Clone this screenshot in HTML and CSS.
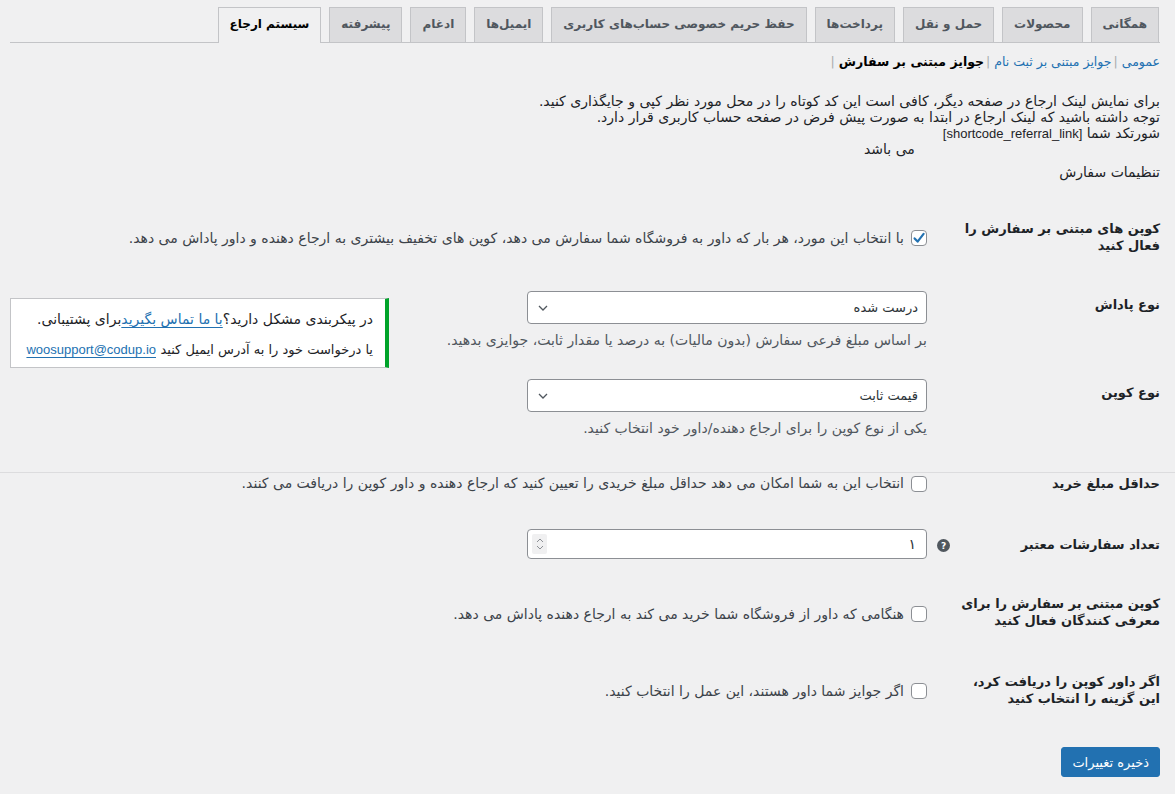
FILE: index.html
```html
<!DOCTYPE html>
<html lang="fa" dir="rtl">
  <head>
    <meta charset="UTF-8" />
    <meta name="viewport" content="width=device-width, initial-scale=1.0" />
    <title>سیستم ارجاع</title>
    <link rel="stylesheet" href="styles.css">
  </head>
  <body>
    <div class="wrap">
      <nav class="nav-tabs">
        <a class="nav-tab">همگانی</a>
        <a class="nav-tab">محصولات</a>
        <a class="nav-tab">حمل و نقل</a>
        <a class="nav-tab">پرداخت‌ها</a>
        <a class="nav-tab">حفظ حریم خصوصی حساب‌های کاربری</a>
        <a class="nav-tab">ایمیل‌ها</a>
        <a class="nav-tab">ادغام</a>
        <a class="nav-tab">پیشرفته</a>
        <a class="nav-tab nav-tab-active">سیستم ارجاع</a>
      </nav>

      <ul class="subsubsub">
        <li><a class="link">عمومی</a> <span class="sep">|</span></li>
        <li><a class="link">جوایز مبتنی بر ثبت نام</a> <span class="sep">|</span></li>
        <li><b class="current">جوایز مبتنی بر سفارش</b> <span class="sep">|</span></li>
      </ul>

      <div class="intro">
        <p>برای نمایش لینک ارجاع در صفحه دیگر، کافی است این کد کوتاه را در محل مورد نظر کپی و جایگذاری کنید.</p>
        <p>توجه داشته باشید که لینک ارجاع در ابتدا به صورت پیش فرض در صفحه حساب کاربری قرار دارد.</p>
        <p class="shortcode-line"><span>شورتکد شما <span class="latin shortcode" dir="ltr">[shortcode_referral_link]</span></span><span class="shortcode-tail">می باشد</span></p>
      </div>

      <h2 class="section-title">تنظیمات سفارش</h2>

      <div class="form-table first-table">
        <div class="row">
          <div class="row-label">کوپن های مبتنی بر سفارش را فعال کنید</div>
          <div class="row-tip"></div>
          <div class="row-field">
            <label class="check-line">
              <span class="check is-checked">
                <svg width="14" height="14" viewBox="0 0 14 14"><path d="M2.6 7.4 L5.6 10.6 L11.6 2.8" fill="none" stroke="#2271b1" stroke-width="2.2" stroke-linecap="round" stroke-linejoin="round"/></svg>
              </span>
              با انتخاب این مورد، هر بار که داور به فروشگاه شما سفارش می دهد، کوپن های تخفیف بیشتری به ارجاع دهنده و داور پاداش می دهد.
            </label>
          </div>
        </div>

        <div class="row row-with-aside">
          <div class="row-label">نوع پاداش</div>
          <div class="row-tip"></div>
          <div class="row-field row-field-top">
            <div class="select">
              <span>درست شده</span>
              <svg width="10" height="6" viewBox="0 0 10 6"><path d="M1 1 L5 5 L9 1" fill="none" stroke="#50575e" stroke-width="1.3"/></svg>
            </div>
            <p class="description">بر اساس مبلغ فرعی سفارش (بدون مالیات) به درصد یا مقدار ثابت، جوایزی بدهید.</p>
          </div>
          <div class="support-box">
            <p>در پیکربندی مشکل دارید؟<a class="link underline">با ما تماس بگیرید</a>برای پشتیبانی.</p>
            <p><span class="support-ask">یا درخواست خود را به آدرس ایمیل کنید</span> <a class="link underline latin email">woosupport@codup.io</a></p>
          </div>
        </div>

        <div class="row">
          <div class="row-label">نوع کوپن</div>
          <div class="row-tip"></div>
          <div class="row-field row-field-top">
            <div class="select">
              <span>قیمت ثابت</span>
              <svg width="10" height="6" viewBox="0 0 10 6"><path d="M1 1 L5 5 L9 1" fill="none" stroke="#50575e" stroke-width="1.3"/></svg>
            </div>
            <p class="description">یکی از نوع کوپن را برای ارجاع دهنده/داور خود انتخاب کنید.</p>
          </div>
        </div>
      </div>
    </div>

    <hr class="divider">

    <div class="wrap">
      <div class="form-table">
        <div class="row row-compact">
          <div class="row-label">حداقل مبلغ خرید</div>
          <div class="row-tip"></div>
          <div class="row-field">
            <label class="check-line">
              <span class="check"></span>
              انتخاب این به شما امکان می دهد حداقل مبلغ خریدی را تعیین کنید که ارجاع دهنده و داور کوپن را دریافت می کنند.
            </label>
          </div>
        </div>

        <div class="row row-input">
          <div class="row-label">تعداد سفارشات معتبر</div>
          <div class="row-tip"><span class="help-tip">?</span></div>
          <div class="row-field">
            <div class="number-input">
              <span>۱</span>
              <span class="spinner">
                <svg width="8" height="14" viewBox="0 0 8 14"><path d="M1 5 L4 2 L7 5 M1 9 L4 12 L7 9" fill="none" stroke="#8c8f94" stroke-width="1"/></svg>
              </span>
            </div>
          </div>
        </div>

        <div class="row row-tall">
          <div class="row-label">کوپن مبتنی بر سفارش را برای معرفی کنندگان فعال کنید</div>
          <div class="row-tip"></div>
          <div class="row-field">
            <label class="check-line">
              <span class="check"></span>
              هنگامی که داور از فروشگاه شما خرید می کند به ارجاع دهنده پاداش می دهد.
            </label>
          </div>
        </div>

        <div class="row">
          <div class="row-label">اگر داور کوپن را دریافت کرد، این گزینه را انتخاب کنید</div>
          <div class="row-tip"></div>
          <div class="row-field">
            <label class="check-line">
              <span class="check"></span>
              اگر جوایز شما داور هستند، این عمل را انتخاب کنید.
            </label>
          </div>
        </div>
      </div>

      <p class="submit">
        <button class="button-primary">ذخیره تغییرات</button>
      </p>
    </div>
  </body>
</html>
```

FILE: styles.css
```css
* {
  box-sizing: border-box;
}
body {
  margin: 0;
  background-color: #f0f0f1;
  color: #3c434a;
  font-family: "DejaVu Sans", sans-serif;
  font-size: 14px;
}
p {
  margin: 0;
}
.wrap {
  margin: 0 15px 0 10px;
}
.latin {
  font-family: "Liberation Sans", Arial, sans-serif;
}
.link {
  color: #2271b1;
  text-decoration: none;
}
.underline {
  text-decoration: underline;
  text-underline-offset: 3px;
}

/* tabs */
.nav-tabs {
  display: flex;
  gap: 8px;
  padding-top: 7px;
  padding-right: 1px;
  border-bottom: 1px solid #c3c4c7;
}
.nav-tab {
  height: 35px;
  line-height: 33px;
  padding: 0 11px;
  background-color: #dcdcde;
  border: 1px solid #c3c4c7;
  border-bottom: none;
  color: #50575e;
  font-size: 12px;
  font-weight: 600;
  white-space: nowrap;
}
.nav-tab-active {
  background-color: #f0f0f1;
  color: #000;
  margin-bottom: -1px;
  height: 36px;
}

/* sub links */
.subsubsub {
  list-style: none;
  display: flex;
  margin: 10px 0 0 0;
  padding: 0;
  font-size: 12.5px;
  line-height: 18px;
}
.subsubsub li {
  white-space: nowrap;
}
.sep {
  color: #a7aaad;
  margin-left: 2px;
}
.current {
  color: #000;
}

/* intro */
.intro {
  margin-top: 22px;
  color: #1d2327;
  font-size: 14px;
  line-height: 16px;
}
.shortcode-line {
  display: flex;
  align-items: flex-start;
  height: 32px;
}
.shortcode {
  font-size: 13px;
}
.shortcode-tail {
  margin-top: 16px;
  margin-right: 28px;
}
.section-title {
  margin: 5px 0 0 0;
  font-size: 14px;
  font-weight: 500;
  color: #1d2327;
  line-height: 20px;
}

/* form rows */
.first-table {
  margin-top: 18px;
}
.row {
  display: grid;
  grid-template-columns: 210px 23px 1fr;
}
.row-with-aside {
  grid-template-columns: 210px 23px 1fr 379px;
}
.row-label {
  padding: 20px 0 22px 10px;
  color: #1d2327;
  font-size: 13px;
  font-weight: 600;
  line-height: 17px;
}
.row-tip {
  align-self: center;
}
.row-field {
  align-self: center;
  padding: 15px 0;
  line-height: 17px;
}
.row-field-top {
  align-self: start;
}
.row-compact .row-label {
  padding: 2px 0 21px 10px;
}
.row-compact .row-field {
  align-self: start;
  padding: 2px 0 0 0;
}
.row-input .row-label {
  padding-top: 23px;
}
.row-tall .row-label {
  padding-bottom: 24px;
}

.check-line {
  display: flex;
  align-items: center;
  gap: 7px;
  font-size: 14px;
  white-space: nowrap;
}
.check {
  width: 16px;
  height: 16px;
  flex-shrink: 0;
  display: flex;
  align-items: center;
  justify-content: center;
  background-color: #fff;
  border: 1px solid #8c8f94;
  border-radius: 4px;
}

.select {
  display: flex;
  justify-content: space-between;
  align-items: center;
  width: 400px;
  height: 33px;
  padding: 0 8px 0 10px;
  background-color: #fff;
  border: 1px solid #8c8f94;
  border-radius: 4px;
  color: #2c3338;
  font-size: 13px;
}
.description {
  margin-top: 8px;
  color: #50575e;
  font-size: 14px;
  white-space: nowrap;
}

.support-box {
  align-self: start;
  margin-top: 22px;
  margin-bottom: -20px;
  height: 70px;
  padding: 10px 12px 0 10px;
  background-color: #fff;
  border: 1px solid #c3c4c7;
  border-right: 4px solid #00a32a;
  color: #1d2327;
  font-size: 14px;
  line-height: 20px;
  white-space: nowrap;
}
.support-box p + p {
  margin-top: 10px;
}
.support-ask {
  font-size: 13px;
}
.email {
  font-size: 13px;
}

.divider {
  margin: 20px 0 0 0;
  border: none;
  border-top: 1px solid #dcdcde;
  height: 0;
}

.help-tip {
  display: inline-flex;
  align-items: center;
  justify-content: center;
  width: 13px;
  height: 13px;
  border-radius: 50%;
  background-color: #50575e;
  color: #fff;
  font-size: 9px;
  font-weight: bold;
}
.number-input {
  display: flex;
  justify-content: space-between;
  align-items: center;
  width: 400px;
  height: 30px;
  padding: 0 10px 0 4px;
  background-color: #fff;
  border: 1px solid #8c8f94;
  border-radius: 4px;
  color: #2c3338;
}
.spinner {
  display: flex;
  align-items: center;
  justify-content: center;
  width: 15px;
  height: 20px;
  background-color: #f0f0f1;
  border-radius: 2px;
}

.submit {
  margin-top: 18px;
}
.button-primary {
  height: 30px;
  padding: 0 10px;
  background-color: #2271b1;
  border: 1px solid #2271b1;
  border-radius: 3px;
  color: #fff;
  font-family: "DejaVu Sans", sans-serif;
  font-size: 13px;
}
```
